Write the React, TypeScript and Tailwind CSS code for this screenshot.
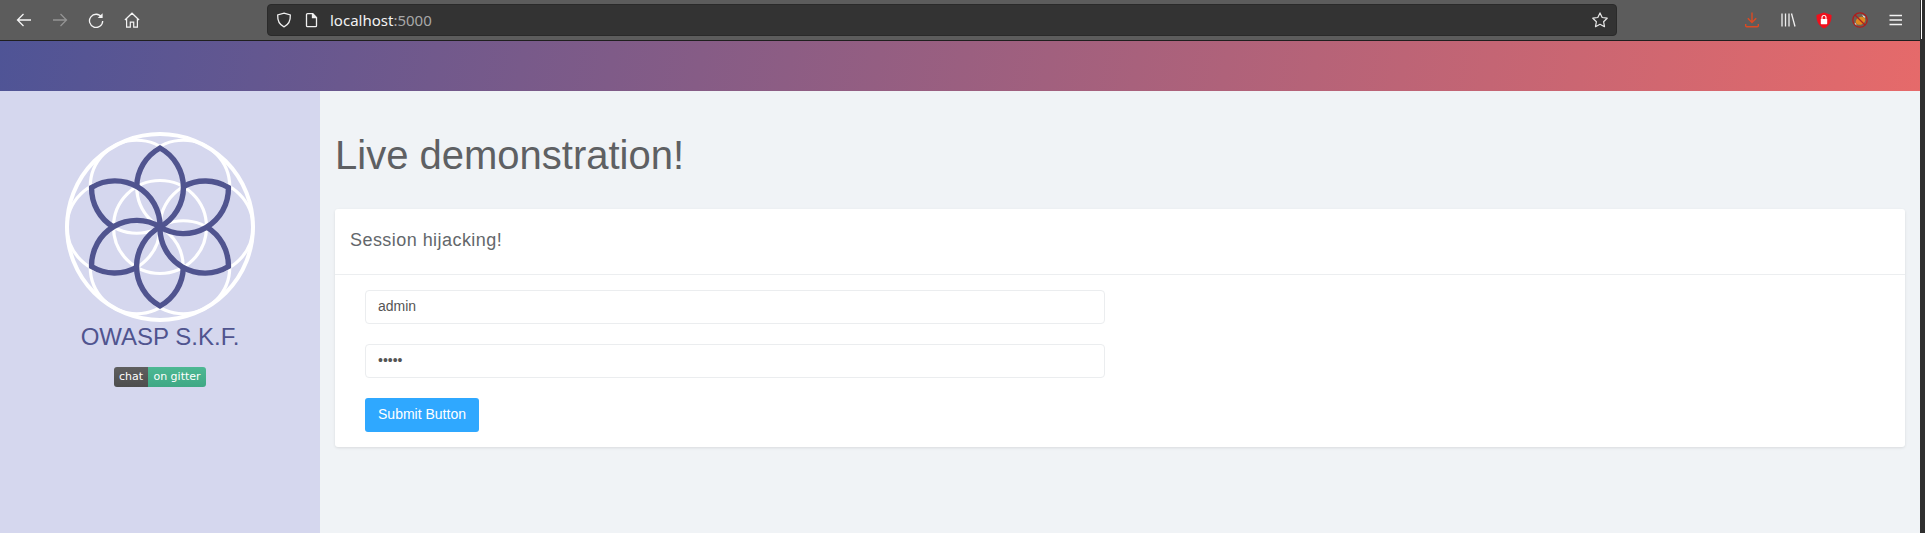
const R = 46.5;
const C = [[R,0],[R/2,R*0.866],[-R/2,R*0.866],[-R,0],[-R/2,-R*0.866],[R/2,-R*0.866]];
const ANGLES = [0,60,120,180,240,300];

function Logo() {
  return (
    <svg width="194" height="194" viewBox="-97 -97 194 194" className="block">
      <circle r="93" fill="none" stroke="#fff" strokeWidth="4" />
      <circle r={R} fill="none" stroke="#fff" strokeWidth="3.2" />
      {C.map(([x, y], i) => (
        <circle key={i} cx={x} cy={y} r={R} fill="none" stroke="#fff" strokeWidth="3.2" />
      ))}
      {ANGLES.map((a) => (
        <path
          key={a}
          transform={`rotate(${a})`}
          d="M-23.3 -40.4 A45 45 0 0 1 0 -79 A45 45 0 0 1 0 0"
          fill="none"
          stroke="#50548f"
          strokeWidth="5.4"
          strokeMiterlimit="10"
        />
      ))}
    </svg>
  );
}

function Back({ color = "#f4f4f4" }: { color?: string }) {
  return (
    <svg width="16" height="16" viewBox="0 0 16 16" fill="none" stroke={color} strokeWidth="1.3">
      <path d="M1.5 8H15M7.5 2 1.5 8l6 6" />
    </svg>
  );
}

function Toolbar() {
  return (
    <div className="flex h-[41px] shrink-0 items-center border-b border-[#1f1f1f] bg-[#5c5c5c]">
      <div className="flex w-[267px] shrink-0 items-center pl-[16px] gap-[20px]">
        <Back />
        <div className="rotate-180"><Back color="#949494" /></div>
        <svg width="16" height="16" viewBox="0 0 16 16" fill="none" stroke="#f4f4f4" strokeWidth="1.3">
          <path d="M13.6 5.2A6.6 6.6 0 1 0 14.7 9" />
          <path d="M14.6 1.2v4.9H9.7z" fill="#f4f4f4" stroke="none" />
        </svg>
        <svg width="16" height="16" viewBox="0 0 16 16" fill="none" stroke="#f4f4f4" strokeWidth="1.2">
          <path d="M.9 8 8 1.2 15.1 8M2.6 6.8v8.3h3.7v-5h3.4v5h3.7V6.8" />
        </svg>
      </div>
      <div className="flex h-[32px] w-[1350px] shrink-0 items-center rounded-[4px] border border-[#2a2a2a] bg-[#333333] pl-[8px] pr-[6px]">
        <svg width="16" height="16" viewBox="0 0 16 16" fill="none" stroke="#f0f0f0" strokeWidth="1.3" className="mr-[13px]">
          <path d="M8 1.2 14.3 3c.3 5.6-1.5 9.6-6.3 11.8C3.200 12.600 1.400 8.600 1.700 3z" />
        </svg>
        <svg width="14" height="16" viewBox="0 0 14 16" fill="none" stroke="#f0f0f0" strokeWidth="1.3" className="mr-[11px]">
          <path d="M2.500 1.700h5.300l3.700 3.700v8.300a1 1 0 0 1-1 1h-8a1 1 0 0 1-1-1v-11a1 1 0 0 1 1-1z" />
          <path d="M7.500 1.700v4h4" fill="#f0f0f0" />
        </svg>
        <span className="text-[15px] font-['Noto_Sans',sans-serif] text-[#f2f2f2]">localhost<span className="text-[#a8a8a8]">:5000</span></span>
        <svg width="16" height="16" viewBox="0 0 16 16" fill="none" stroke="#e8e8e8" strokeWidth="1.2" className="ml-auto mr-[2px]">
          <path d="M8 .9 10.200 5.500l5 .7-3.600 3.500.9 5L8 12.300 3.500 14.700l.9-5L.8 6.200l5-.7z" strokeLinejoin="round" />
        </svg>
      </div>
      <div className="flex flex-1 items-center pl-[127px] gap-[20px]">
        <svg width="16" height="16" viewBox="0 0 16 16" fill="none" stroke="#dc4a22" strokeWidth="1.4">
          <path d="M8 .5V10M3.800 6.300 8 10.500l4.200-4.200M1.700 12v1.800a1 1 0 0 0 1 1h10.600a1 1 0 0 0 1-1V12" />
        </svg>
        <svg width="16" height="16" viewBox="0 0 16 16" fill="none" stroke="#f0f0f0" strokeWidth="1.3">
          <path d="M2 1.500v13M5.500 1.500v13M9 1.500v13M11.500 1.500l3.500 13" />
        </svg>
        <svg width="16" height="17" viewBox="0 0 16 17">
          <path d="M8 .5 15.500 3c.3 6.200-2 10.800-7.500 13.500C2.500 13.800.2 9.200.5 3z" fill="#f00f1c" />
          <rect x="4.800" y="7" width="6.400" height="5.200" rx=".6" fill="#fff" />
          <path d="M6 7V5.500a2 2 0 0 1 4 0V7" fill="none" stroke="#fff" strokeWidth="1.100" />
        </svg>
        <svg width="16" height="16" viewBox="0 0 16 16">
          <circle cx="8" cy="8" r="7.200" fill="#6f5f55" stroke="#b01c1c" strokeWidth="1.300" />
          <path d="M10 2.500 13.500 5 12 6zM3 10.500 5 13.500 2.800 12z" fill="#efe9e2" />
          <ellipse cx="8.500" cy="8.800" rx="5" ry="3.700" fill="#e08a1e" transform="rotate(-25 8.500 8.800)" />
          <path d="M3 3l10 10" stroke="#b01c1c" strokeWidth="1.200" />
        </svg>
        <svg width="16" height="12" viewBox="0 0 16 12" stroke="#f4f4f4" strokeWidth="1.300">
          <path d="M1.500 1.500h12.500M1.500 6h12.500M1.500 10.500h12.500" />
        </svg>
      </div>
    </div>
  );
}

export default function App() {
  return (
    <div className="relative flex h-[533px] w-[1925px] flex-col overflow-hidden bg-[#f0f3f6] font-['Liberation_Sans',Arial,sans-serif]">
      <Toolbar />
      <div className="h-[50px] shrink-0 bg-[linear-gradient(100deg,#4f5496,#e66a6a)]" />
      <div className="flex flex-1">
        <aside className="flex w-[320px] shrink-0 flex-col items-center bg-[#d5d7ee] pt-[39px]">
          <Logo />
          <div className="text-[24px] leading-[26px] text-[#50548f]">OWASP S.K.F.</div>
          <div className="mt-[17px] flex h-[20px] w-[92px] overflow-hidden rounded-[3px] font-['DejaVu_Sans',sans-serif] text-[11px] leading-[20px] text-white">
            <span className="w-[34px] bg-[linear-gradient(#5f5f5f,#4d4d4d)] text-center">chat</span>
            <span className="flex-1 bg-[linear-gradient(#4db893,#3fa884)] text-center">on gitter</span>
          </div>
        </aside>
        <main className="flex-1 pl-[15px] pr-[20px]">
          <h1 className="mt-[40px] text-[40px] leading-[48px] text-[#5e6063]">Live demonstration!</h1>
          <section className="mt-[30px] rounded-[3px] bg-white shadow-[0_1px_3px_rgba(0,0,0,0.1)]">
            <div className="flex h-[66px] items-center border-b border-[#eceef0] pb-[3px] pl-[15px] text-[18px] tracking-[0.45px] text-[#63676b]">Session hijacking!</div>
            <form className="flex flex-col px-[30px] pt-[15px] pb-[15px]">
              <input readOnly value="admin" className="h-[34px] w-[740px] rounded-[4px] border border-[#ebedef] bg-white px-[12px] pb-[2px] text-[14px] text-[#555555] outline-none" />
              <input readOnly type="password" value="admin" className="mt-[20px] h-[34px] w-[740px] rounded-[4px] border border-[#ebedef] bg-white px-[12px] pb-[2px] text-[14px] text-[#555555] outline-none" />
              <button type="button" className="mt-[20px] h-[34px] w-[114px] rounded-[3px] bg-[#2fa8ff] pb-[2px] text-[14px] text-white">Submit Button</button>
            </form>
          </section>
        </main>
      </div>
      <div className="absolute right-0 top-0 h-full w-[5px] bg-[#2f2f2f]" />
      <div className="absolute top-0 right-[3px] h-[39px] w-[1px] bg-white" />
    </div>
  );
}
